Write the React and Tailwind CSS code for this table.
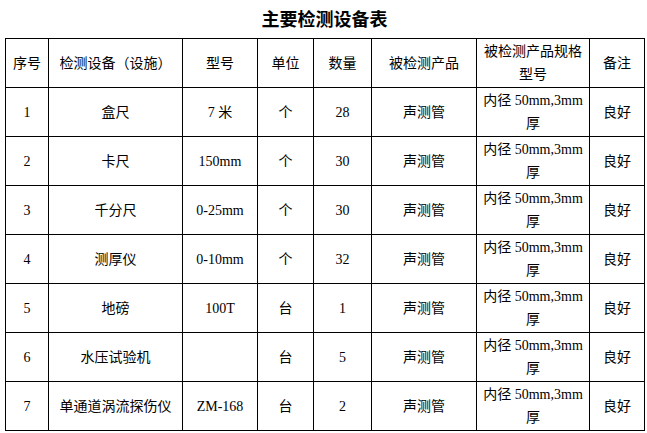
const rows = [
  ['1', '盒尺', '7 米', '个', '28'],
  ['2', '卡尺', '150mm', '个', '30'],
  ['3', '千分尺', '0-25mm', '个', '30'],
  ['4', '测厚仪', '0-10mm', '个', '32'],
  ['5', '地磅', '100T', '台', '1'],
  ['6', '水压试验机', '', '台', '5'],
  ['7', '单通道涡流探伤仪', 'ZM-168', '台', '2'],
];

const widths = ['w-[43px]', 'w-[134px]', 'w-[75px]', 'w-[56px]', 'w-[58px]', 'w-[105px]', 'w-[113px]', 'w-[55px]'];

export default function App() {
  return (
    <div className="w-[647px] h-[433px] bg-white text-black pl-[5px] font-['Liberation_Serif','Noto_Sans_CJK_SC',serif] text-[14px]">
      <div className="w-[639px] h-[38px] flex items-center justify-center pb-[2px] text-[18px] font-bold font-['Noto_Sans_CJK_SC',sans-serif]">
        主要检测设备表
      </div>
      <table className="w-[639px] table-fixed border-collapse">
        <colgroup>
          {widths.map((w, i) => <col key={i} className={w} />)}
        </colgroup>
        <thead>
          <tr className="h-[49px]">
            <th className="border border-black font-normal">序号</th>
            <th className="border border-black font-normal">检测设备（设施）</th>
            <th className="border border-black font-normal">型号</th>
            <th className="border border-black font-normal">单位</th>
            <th className="border border-black font-normal">数量</th>
            <th className="border border-black font-normal">被检测产品</th>
            <th className="border border-black font-normal leading-[23px]">被检测产品规格<br />型号</th>
            <th className="border border-black font-normal">备注</th>
          </tr>
        </thead>
        <tbody>
          {rows.map(r => (
            <tr key={r[0]} className="h-[49px]">
              <td className="border border-black text-center">{r[0]}</td>
              <td className="border border-black text-center">{r[1]}</td>
              <td className="border border-black text-center">{r[2]}</td>
              <td className="border border-black text-center">{r[3]}</td>
              <td className="border border-black text-center">{r[4]}</td>
              <td className="border border-black text-center">声测管</td>
              <td className="border border-black text-center leading-[23px]">内径 50mm,3mm<br />厚</td>
              <td className="border border-black text-center">良好</td>
            </tr>
          ))}
        </tbody>
      </table>
    </div>
  );
}
